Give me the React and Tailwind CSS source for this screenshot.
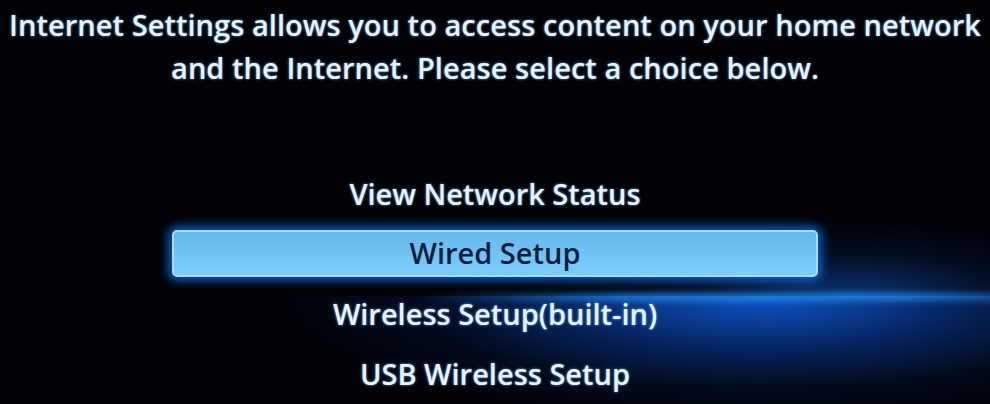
import React from "react";

const font = { fontFamily: '"Open Sans", "DejaVu Sans", sans-serif' };

export default function App() {
  const items = ["View Network Status", "Wired Setup", "Wireless Setup(built-in)", "USB Wireless Setup"];
  return (
    <div className="relative w-[990px] h-[404px] overflow-hidden bg-[#010206]" style={font}>
      {/* background glow */}
      <div className="pointer-events-none absolute left-[150px] top-[296px] w-[900px] h-[108px] bg-[radial-gradient(ellipse_55%_120%_at_68%_0%,rgba(14,92,212,0.95)_0%,rgba(9,60,160,0.6)_40%,rgba(5,30,85,0.3)_70%,transparent_100%)]" />
      <div className="pointer-events-none absolute left-[560px] top-[220px] w-[480px] h-[78px] bg-[radial-gradient(ellipse_60%_100%_at_60%_100%,rgba(18,90,200,0.6)_0%,rgba(10,45,120,0.25)_55%,transparent_100%)]" />
      <div className="pointer-events-none absolute left-[420px] top-[293px] w-[600px] h-[8px] bg-[linear-gradient(90deg,transparent,rgba(40,140,240,0.75)_35%,rgba(40,140,240,0.75)_80%,rgba(40,140,240,0.4))] blur-[3px]" />

      <div className="relative flex w-full flex-col items-center">
        <div className="w-full whitespace-nowrap pt-[3px] text-center text-[29px] leading-[43px] tracking-[0.05px] font-semibold text-[#e6f3ff] [text-shadow:0_0_3px_rgba(120,190,255,0.8)]">
          <div>Internet Settings allows you to access content on your home network</div>
          <div>and the Internet. Please select a choice below.</div>
        </div>

        <div className="mt-[75px] flex flex-col items-center whitespace-nowrap">
          {items.map((t, i) =>
            i === 1 ? (
              <div key={t} className="h-[60px] flex items-center">
                <div className="w-[646px] h-[47px] -translate-y-[1px] rounded-[5px] border-2 border-[#a6ddff] bg-[linear-gradient(180deg,#66b8ec,#7ccdfb)] shadow-[0_0_10px_4px_rgba(20,110,230,0.8)] flex items-center justify-center text-[29px] font-semibold text-[#0b1d3f]">
                  {t}
                </div>
              </div>
            ) : (
              <div key={t} className="h-[60px] flex items-center text-[29px] font-semibold text-[#e6f3ff] [text-shadow:0_0_3px_rgba(120,190,255,0.8)]">
                {t}
              </div>
            )
          )}
        </div>
      </div>
    </div>
  );
}
